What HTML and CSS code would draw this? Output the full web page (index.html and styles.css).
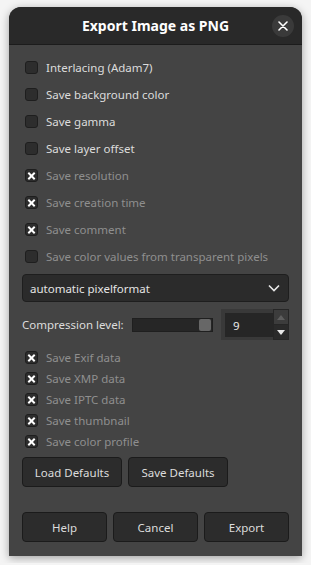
FILE: index.html
```html
<!DOCTYPE html>
<html lang="en">
<head>
  <meta charset="UTF-8">
  <title>Export Image as PNG</title>
  <link rel="stylesheet" href="styles.css">
</head>
<body>
  <div class="dialog">
    <div class="titlebar">
      <span class="title">Export Image as PNG</span>
      <span class="close">
        <svg width="10" height="10" viewBox="0 0 10 10"><path d="M1 1 L9 9 M9 1 L1 9" stroke="#fff" stroke-width="1.6" stroke-linecap="round"/></svg>
      </span>
    </div>

    <div class="content">
      <div class="options">
        <div class="check"><span class="box"></span><span class="label">Interlacing (Adam7)</span></div>
        <div class="check"><span class="box"></span><span class="label">Save background color</span></div>
        <div class="check"><span class="box"></span><span class="label">Save gamma</span></div>
        <div class="check"><span class="box"></span><span class="label">Save layer offset</span></div>
        <div class="check dim"><span class="box on"></span><span class="label">Save resolution</span></div>
        <div class="check dim"><span class="box on"></span><span class="label">Save creation time</span></div>
        <div class="check dim"><span class="box on"></span><span class="label">Save comment</span></div>
        <div class="check dim"><span class="box"></span><span class="label">Save color values from transparent pixels</span></div>
      </div>

      <div class="combo">
        <span>automatic pixelformat</span>
        <svg width="12" height="8" viewBox="0 0 12 8"><path d="M1 1.5 L6 6.5 L11 1.5" fill="none" stroke="#e8e8e8" stroke-width="1.6"/></svg>
      </div>

      <div class="compress">
        <span class="clabel">Compression level:</span>
        <div class="slider"><span class="knob"></span></div>
        <div class="spin">
          <div class="entry">9</div>
          <div class="arrows">
            <span class="arrow up"><svg width="8" height="5" viewBox="0 0 8 5"><path d="M0 5 L4 0 L8 5 Z" fill="#5e5e5e"/></svg></span>
            <span class="arrow down"><svg width="8" height="5" viewBox="0 0 8 5"><path d="M0 0 L4 5 L8 0 Z" fill="#e8e8e8"/></svg></span>
          </div>
        </div>
      </div>

      <div class="options tight">
        <div class="check dim"><span class="box on"></span><span class="label">Save Exif data</span></div>
        <div class="check dim"><span class="box on"></span><span class="label">Save XMP data</span></div>
        <div class="check dim"><span class="box on"></span><span class="label">Save IPTC data</span></div>
        <div class="check dim"><span class="box on"></span><span class="label">Save thumbnail</span></div>
        <div class="check dim"><span class="box on"></span><span class="label">Save color profile</span></div>
      </div>

      <div class="defaults">
        <button class="btn wide">Load Defaults</button>
        <button class="btn wide">Save Defaults</button>
      </div>
    </div>

    <div class="actions">
      <button class="btn">Help</button>
      <button class="btn">Cancel</button>
      <button class="btn">Export</button>
    </div>
  </div>
</body>
</html>
```

FILE: styles.css
```css
body
{
  margin: 0;
  padding: 7px 9px;
  background-color: #f4f4f4;
  font-family: "Noto Sans", sans-serif;
  font-size: 11.5px;
}
.dialog
{
  width: 293px;
  height: 549px;
  background-color: #444444;
  border-radius: 12px 12px 0 0;
  box-shadow: 0 2px 8px rgba(0, 0, 0, 0.35);
  display: flex;
  flex-direction: column;
  overflow: hidden;
}
.titlebar
{
  height: 37px;
  background-color: #292929;
  border-bottom: 1px solid #1c1c1c;
  display: flex;
  align-items: center;
  justify-content: center;
  position: relative;
}
.title
{
  color: #ffffff;
  font-weight: bold;
  font-size: 14px;
}
.close
{
  position: absolute;
  right: 8px;
  top: 8px;
  width: 22px;
  height: 22px;
  border-radius: 50%;
  background-color: #3a3a3a;
  display: flex;
  align-items: center;
  justify-content: center;
}
.content
{
  padding: 9px 13px 0 13px;
  display: flex;
  flex-direction: column;
}
.options
{
  display: flex;
  flex-direction: column;
}
.check
{
  height: 27px;
  display: flex;
  align-items: center;
  padding-left: 3px;
  color: #dcdcdc;
}
.check.dim
{
  color: #8f8f8f;
}
.tight
{
  margin-top: 7px;
}
.tight .check
{
  height: 21px;
}
.box
{
  width: 11px;
  height: 11px;
  border: 1px solid #1e1e1e;
  border-radius: 3px;
  background-color: #2d2d2d;
  margin-right: 8px;
  position: relative;
}
.box.on::before,
.box.on::after
{
  content: "";
  position: absolute;
  left: 1px;
  top: 4.5px;
  width: 9px;
  height: 2px;
  background-color: #ffffff;
  transform: rotate(45deg);
}
.box.on::after
{
  transform: rotate(-45deg);
}
.combo
{
  margin-top: 4px;
  height: 26px;
  background-color: #2b2b2b;
  border: 1px solid #1e1e1e;
  border-radius: 4px;
  display: flex;
  align-items: center;
  justify-content: space-between;
  padding: 0 8px 0 7px;
  color: #e4e4e4;
}
.compress
{
  margin-top: 7px;
  display: flex;
  align-items: center;
  color: #dcdcdc;
}
.clabel
{
  width: 110px;
}
.slider
{
  width: 81px;
  height: 14px;
  background-color: #262626;
  border: 1px solid #1f1f1f;
  box-sizing: border-box;
  position: relative;
}
.knob
{
  position: absolute;
  right: 1px;
  top: 0px;
  width: 12px;
  height: 12px;
  border-radius: 2px;
  background-color: #676767;
}
.spin
{
  margin-left: 8px;
  width: 68px;
  height: 31px;
  box-sizing: border-box;
  background-color: #393939;
  display: flex;
  padding: 0 0 0 4px;
}
.entry
{
  margin: 4px 0 3px 0;
  width: 48px;
  background-color: #262626;
  color: #e8e8e8;
  display: flex;
  align-items: center;
  padding-left: 8px;
  box-sizing: border-box;
}
.arrows
{
  width: 16px;
  display: flex;
  flex-direction: column;
}
.arrow
{
  flex: 1;
  display: flex;
  align-items: center;
  justify-content: center;
  border: 1px solid #262626;
}
.arrow.up
{
  background-color: #3c3c3c;
}
.arrow.down
{
  background-color: #2a2a2a;
  border-top: none;
}
.defaults
{
  margin-top: 5px;
  display: flex;
  gap: 6px;
}
.btn
{
  height: 30px;
  width: 85px;
  background-color: #2c2c2c;
  border: 1px solid #1b1b1b;
  border-radius: 4px;
  color: #dcdcdc;
  font-family: "Noto Sans", sans-serif;
  font-size: 11.5px;
  padding: 0;
}
.btn.wide
{
  width: 100px;
}
.actions
{
  margin-top: auto;
  padding: 0 13px 14px 13px;
  display: flex;
  gap: 6px;
}
```
